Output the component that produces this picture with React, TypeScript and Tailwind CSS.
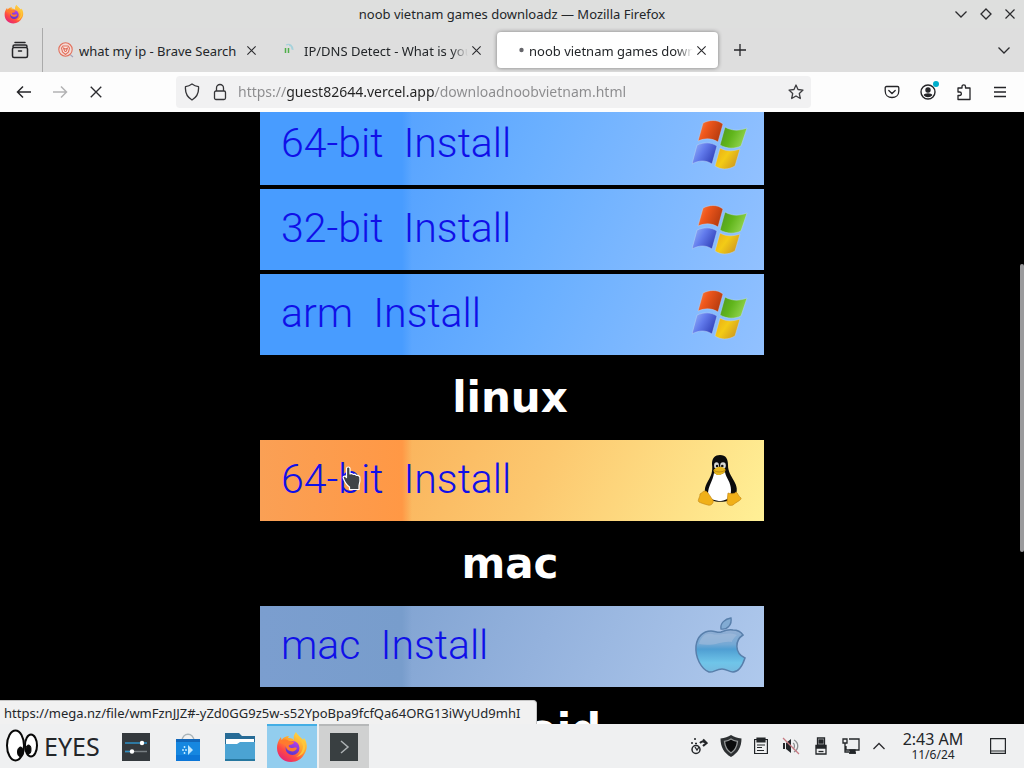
import type { ReactNode } from "react";

function Cross({ size = 12 }: { size?: number }) {
  return (
    <svg width={size} height={size} viewBox="0 0 12 12" fill="none" stroke="#2b2b2e" strokeWidth="1.2">
      <path d="M1.5 1.5l9 9M10.5 1.5l-9 9" />
    </svg>
  );
}

function Chevron({ up = false }: { up?: boolean }) {
  return (
    <svg width="14" height="14" viewBox="0 0 14 14" fill="none" stroke="#2b2b2e" strokeWidth="1.3">
      <path d={up ? "M1.5 10L7 4.5 12.5 10" : "M1.5 4.5L7 10l5.5-5.5"} />
    </svg>
  );
}

function FirefoxLogo({ size, id }: { size: number; id: string }) {
  return (
    <svg width={size} height={size} viewBox="0 0 32 32">
      <defs>
        <linearGradient id={id + "body"} x1="0.85" y1="0.05" x2="0.2" y2="1">
          <stop offset="0" stopColor="#ffe14a" />
          <stop offset="0.4" stopColor="#ffa12c" />
          <stop offset="0.7" stopColor="#ff4b42" />
          <stop offset="1" stopColor="#e02080" />
        </linearGradient>
        <linearGradient id={id + "globe"} x1="0.6" y1="0" x2="0.3" y2="1">
          <stop offset="0" stopColor="#b341e8" />
          <stop offset="1" stopColor="#5734cf" />
        </linearGradient>
      </defs>
      <path
        d="M20 1c1 3 5 5 7 8l1-2c3 4 4 10 1 15-3 6-8 9-14 9C7 31 1 25 1 17c0-4 1-7 4-11l.5 3C8 6 10 5 13 5l-1 2c2 0 4 0 6 2-1-3 0-6 2-8z"
        fill={"url(#" + id + "body)"}
      />
      <circle cx="16.5" cy="17" r="7" fill={"url(#" + id + "globe)"} />
      <path d="M3 11c3-3 7-3 10-1 2 0 4 0 5 1 0 2-3 3-5 3-1 2 1 3 3 3 2 0 3-1 5 0-1 3-4 4-7 3-3-1-5-4-4-7-3 0-5 0-7-2z" fill="#ff7a2e" />
      <path d="M20 2c1 4 6 7 7 13 0 5-3 9-7 11 8-1 11-9 8-15-2-4-6-5-8-9z" fill="#ffc73a" />
    </svg>
  );
}

function WindowsLogo() {
  return (
    <svg className="mt-[3px]" width="56" height="52" viewBox="0 0 56 52">
      <defs>
        <linearGradient id="winRed" x1="0" y1="0" x2="1" y2="0.4">
          <stop offset="0" stopColor="#f58a52" />
          <stop offset="0.4" stopColor="#f1581c" />
          <stop offset="1" stopColor="#b83c10" />
        </linearGradient>
        <linearGradient id="winGreen" x1="0" y1="0" x2="1" y2="0.4">
          <stop offset="0" stopColor="#4d9425" />
          <stop offset="0.5" stopColor="#60b51b" />
          <stop offset="1" stopColor="#91d34e" />
        </linearGradient>
        <linearGradient id="winBlue" x1="0" y1="0" x2="1" y2="0.5">
          <stop offset="0" stopColor="#9ab9fa" />
          <stop offset="0.5" stopColor="#627bec" />
          <stop offset="1" stopColor="#3546bd" />
        </linearGradient>
        <linearGradient id="winYellow" x1="0" y1="0" x2="1" y2="0.6">
          <stop offset="0" stopColor="#e9a818" />
          <stop offset="0.5" stopColor="#f3cb16" />
          <stop offset="1" stopColor="#cf9a20" />
        </linearGradient>
      </defs>
      <path d="M9 3c6-3 14-4 20 1l-5 18c-6-4-13-4-20-1z" transform="translate(2 0)" fill="url(#winRed)" stroke="#b9d4f5" strokeWidth=".5" />
      <path d="M33 7c7 4 14 4 22 1l-6 18c-6 3-14 3-21-1z" fill="url(#winGreen)" stroke="#b9d4f5" strokeWidth=".5" />
      <path d="M5 25c7-3 14-3 20 1l-5 18c-6-4-13-4-20 0z" fill="url(#winBlue)" stroke="#b9d4f5" strokeWidth=".5" />
      <path d="M28 28c7 4 14 3 20 1l-5 17c-7 4-14 4-20 0z" fill="url(#winYellow)" stroke="#b9d4f5" strokeWidth=".5" />
    </svg>
  );
}

function TuxLogo() {
  return (
    <svg width="56" height="52" viewBox="0 0 56 52">
      <path d="M20 9c0-6 3-9 8-9 6 0 8 4 8 10 0 7 3 10 6 16 3 5 4 10 1 15-3 7-24 8-28 1-3-5-3-9 1-16 3-5 5-9 4-17z" fill="#0b0b0c" />
      <path d="M22 18c4 3 7 2 11-1 1 6 6 10 6 18 0 7-3 10-10 11-6 0-12-2-13-7 0-8 5-13 6-21z" fill="#fff" />
      <ellipse cx="24.5" cy="10.5" rx="2.4" ry="3.2" fill="#d9d9d6" />
      <ellipse cx="31" cy="10.5" rx="2.8" ry="3.3" fill="#d9d9d6" />
      <circle cx="25" cy="11" r="1.2" fill="#111" />
      <circle cx="30.3" cy="11" r="1.3" fill="#111" />
      <path d="M21.5 15c2-2 5-4 7-3 2 0 5 1 5 3 0 3-5 5-7 5s-5-2-5-5z" fill="#e7b61d" />
      <path d="M22 15.500c3 2 7 2 11 0" fill="none" stroke="#a87611" strokeWidth=".7" />
      <path d="M8 39c2-1 3-3 5-3 3 0 5 6 8 9 1 3-2 6-5 5-4-1-7-2-9-3-2-2 1-4 1-8z" fill="#f0b019" stroke="#c68916" strokeWidth=".7" />
      <path d="M36 38c2 1 7 1 8-1 2 1 2 4 5 6 1 2-5 4-8 7-3 1-6 0-6-3z" fill="#f0b019" stroke="#c68916" strokeWidth=".7" />
    </svg>
  );
}

function AppleLogo() {
  return (
    <svg width="56" height="60" viewBox="0 0 56 60">
      <defs>
        <linearGradient id="appleFill" x1="0" y1="0" x2="0" y2="1">
          <stop offset="0" stopColor="#93afd4" />
          <stop offset="0.34" stopColor="#75a9d5" />
          <stop offset="0.46" stopColor="#4f9ed2" />
          <stop offset="0.78" stopColor="#6fc5e9" />
          <stop offset="1" stopColor="#75b9df" />
        </linearGradient>
      </defs>
      <path
        d="M29 15c5-2 8-3 12-2 5 0 8 2 10 5-8 5-9 18 2 23-2 6-6 14-12 14-4 0-6-3-11-3-6 0-9 4-13 3C9 52 3 40 4 29c1-9 7-15 15-15 4 0 7 2 10 1z"
        fill="url(#appleFill)"
        stroke="#587fab"
        strokeWidth="1.5"
      />
      <path d="M29 12C28 6 33 2 39 1c1 6-3 12-10 11z" fill="#82abd3" stroke="#587fab" strokeWidth="1.4" />
      <path d="M7 27c2-8 7-11 13-10 9 2 16-3 25 1-3 3-5 5-5 7-9-2-18 5-33 2z" fill="#a9bfdd" opacity=".5" />
    </svg>
  );
}

function HandCursor() {
  return (
    <svg className="absolute top-[26px] left-[82px]" width="20" height="26" viewBox="0 0 20 26">
      <path
        d="M4.500 2.500c0-2 3.500-2 3.500 0V8l1.500-.5 2 1 1.500-.3 1.500 1.300 1.500-.2 1.800 1.500c.5 3 .2 6-.8 9v3.700H7.500v-2.500c-3-2-5-5.500-6.300-9-.4-2 1.500-2.500 3.300-.5z"
        fill="#404446"
        stroke="#fff"
        strokeWidth="1.2"
        strokeLinejoin="round"
      />
    </svg>
  );
}

function InstallLink({ label, tone, logo, children }: { label: string; tone: string; logo: ReactNode; children?: ReactNode }) {
  return (
    <a
      href="#install"
      className={"relative flex h-[81px] shrink-0 items-center justify-between pr-4 pl-[21px] " + tone}
    >
      <span className="flex gap-5 pb-[3px] font-[Roboto,sans-serif] text-[41px] leading-12 font-light text-[#1010e8]">
        <span>{label}</span> <span>Install</span>
      </span>
      {logo}
      {children}
    </a>
  );
}

function Heading({ children }: { children: ReactNode }) {
  return (
    <h2 className="flex h-[85px] shrink-0 items-center justify-center pr-1 font-['DejaVu_Sans',sans-serif] text-[42px] leading-12 font-bold text-white">
      {children}
    </h2>
  );
}

const fade = "[mask-image:linear-gradient(90deg,#000_90%,transparent)]";

function Tab({ title, icon, active = false, long = false }: { title: string; icon: ReactNode; active?: boolean; long?: boolean }) {
  return (
    <div
      className={
        "flex h-9 w-[221px] items-center rounded pr-[11px] pl-[11px] " +
        (active ? "bg-white shadow-[0_0_4px_rgba(0,0,0,0.45)]" : "")
      }
    >
      <span className="flex w-[21px] shrink-0 items-center">{icon}</span>
      <button className={"min-w-0 flex-1 overflow-hidden pt-[2px] text-left text-[13px] leading-5 whitespace-nowrap " + (long ? fade : "")}>
        {title}
      </button>
      <button aria-label="Close tab" className="flex w-[14px] shrink-0 justify-end">
        <Cross size={11} />
      </button>
    </div>
  );
}

function TitleBar() {
  return (
    <header className="flex h-7 shrink-0 items-center justify-between bg-[#dedfde] pr-2 pl-1">
      <span className="w-21">
        <FirefoxLogo size={20} id="title" />
      </span>
      <h1 className="text-[13px] leading-5">noob vietnam games downloadz — Mozilla Firefox</h1>
      <span className="flex w-20 items-center justify-end gap-3">
        <button aria-label="Minimize"><Chevron /></button>
        <button aria-label="Maximize">
          <svg width="12" height="12" viewBox="0 0 12 12" fill="none" stroke="#2b2b2e" strokeWidth="1.3">
            <path d="M6 1l5 5-5 5-5-5z" />
          </svg>
        </button>
        <button aria-label="Close"><Cross /></button>
      </span>
    </header>
  );
}

function TabStrip() {
  return (
    <nav className="flex h-11 shrink-0 items-center bg-[#dedede] pr-[13px]">
      <button aria-label="Firefox View" className="flex h-full w-[43px] items-center justify-center border-r border-[#aaa] pr-[2px]">
        <svg width="18" height="18" viewBox="0 0 18 18" fill="none" stroke="#252528" strokeWidth="1.5" strokeLinecap="round">
          <path d="M4 1.500h10" />
          <path d="M2 5.500c0-1 .8-1.500 1.500-1.500h11c.7 0 1.500.5 1.500 1.500M3 6.500h12c1 0 1.500.5 1.500 1.500v7c0 .8-.7 1.500-1.500 1.500H3c-.8 0-1.500-.7-1.500-1.500V8c0-1 .5-1.500 1.500-1.500zM7.500 10h3" />
        </svg>
      </button>
      <div className="ml-1 flex gap-1">
        <Tab
          title="what my ip - Brave Search"
          icon={
            <svg width="16" height="16" viewBox="0 0 16 16" fill="none" stroke="#e2705c" strokeWidth="1.1">
              <circle cx="7.5" cy="7.5" r="6.700" fill="#f3dbd6" />
              <path d="M5 4h5l1.500 2-1 4-3 2.500L4.500 10l-1-4z" fill="#fbe9e5" />
              <path d="M5.500 6l2 1 2-1-1 3-1 .7-1-.7z" stroke="#e0705c" />
              <path d="M12.500 13l2.500 2" stroke="#a6a1b8" />
            </svg>
          }
        />
        <Tab
          long
          title="IP/DNS Detect - What is your IP"
          icon={
            <svg width="12" height="14" viewBox="0 0 12 14" fill="none">
              <path d="M2.500 5v5M5.500 5v5" stroke="#4fae49" strokeWidth="1.500" />
              <path d="M3 2c4-2 7 1 7 5M6 2.500c2 0 3 2 3 4" stroke="#a6d2db" strokeWidth="1.2" />
            </svg>
          }
        />
        <Tab
          active
          long
          title="noob vietnam games downloadz"
          icon={
            <svg width="16" height="16" viewBox="0 0 16 16">
              <circle cx="13.500" cy="8" r="2.200" fill="#66666b" />
            </svg>
          }
        />
      </div>
      <button aria-label="New tab" className="ml-[15px]">
        <svg width="14" height="14" viewBox="0 0 14 14" stroke="#252528" strokeWidth="1.3">
          <path d="M7 1v12M1 7h12" />
        </svg>
      </button>
      <button aria-label="List all tabs" className="ml-auto"><Chevron /></button>
    </nav>
  );
}

function Toolbar() {
  return (
    <div className="flex h-10 shrink-0 items-center bg-[#fdfdfd] px-4">
      <div className="flex gap-5">
        <button aria-label="Back">
          <svg width="16" height="16" viewBox="0 0 16 16" fill="none" stroke="#252528" strokeWidth="1.5"><path d="M15 8H1.500M7 2.500L1.500 8 7 13.500" /></svg>
        </button>
        <button aria-label="Forward">
          <svg width="16" height="16" viewBox="0 0 16 16" fill="none" stroke="#b2b2b4" strokeWidth="1.5"><path d="M1 8h13.500M9 2.500L14.500 8 9 13.500" /></svg>
        </button>
        <button aria-label="Stop" className="flex w-4 items-center justify-center"><Cross size={14} /></button>
      </div>
      <div className="mr-[73px] ml-[72px] flex h-8 flex-1 items-center rounded bg-[#f1f1f2] pr-[7px] pl-2">
        <svg width="16" height="18" viewBox="0 0 16 18" fill="none" stroke="#353538" strokeWidth="1.300" strokeLinejoin="round">
          <path d="M8 1c2 1.500 4 2.300 6.500 2.600C15 9 13 14 8 17 3 14 1 9 1.500 3.600 4 3.300 6 2.500 8 1z" />
        </svg>
        <svg className="ml-3" width="16" height="18" viewBox="0 0 16 18" fill="none" stroke="#353538" strokeWidth="1.300">
          <rect x="2.500" y="8" width="11" height="8.500" rx="1.500" />
          <path d="M4.500 8V5a3.500 3.500 0 017 0v3" />
        </svg>
        <input
          aria-label="Address"
          className="ml-[10px] min-w-0 flex-1 bg-[linear-gradient(90deg,#8b8b8d_48px,#222_48px,#222_197px,#8b8b8d_197px)] bg-clip-text text-[14px] leading-5 text-transparent outline-none"
          defaultValue="https://guest82644.vercel.app/downloadnoobvietnam.html"
        />
        <button aria-label="Bookmark">
          <svg width="16" height="16" viewBox="0 0 16 16" fill="none" stroke="#3d3d40" strokeWidth="1.300" strokeLinejoin="round">
            <path d="M8 1l2 4.500 5 .6-3.700 3.400 1 5L8 12l-4.300 2.500 1-5L1 6.100l5-.6z" />
          </svg>
        </button>
      </div>
      <div className="flex gap-5">
        <button aria-label="Pocket">
          <svg width="16" height="16" viewBox="0 0 16 16" fill="none" stroke="#252528" strokeWidth="1.300" strokeLinecap="round">
            <path d="M2.500 2.500h11c.8 0 1.300.5 1.300 1.300V7c0 4-3 6.500-6.800 6.500S1.200 11 1.200 7V3.800c0-.8.5-1.300 1.300-1.300zM4.800 6.500L8 9.500l3.200-3" />
          </svg>
        </button>
        <button aria-label="Account" className="relative">
          <svg width="16" height="16" viewBox="0 0 16 16" fill="none" stroke="#252528" strokeWidth="1.400">
            <circle cx="8" cy="8" r="7" />
            <circle cx="8" cy="6" r="2" fill="#252528" />
            <path d="M4.500 11c.5-1.500 6.500-1.500 7 0-1.500 2-5.500 2-7 0z" fill="#252528" />
          </svg>
          <span className="absolute -top-[2px] -right-[3px] size-[6px] rounded-full bg-[#00aecb]" />
        </button>
        <button aria-label="Extensions">
          <svg width="16" height="18" viewBox="0 0 16 18" fill="none" stroke="#252528" strokeWidth="1.300" strokeLinejoin="round">
            <path d="M2 16.500v-4h1.500c2.500 0 2.500-3.500 0-3.500H2V5h4V3.500c0-2.300 3.500-2.300 3.500 0V5H14v11.500z" />
          </svg>
        </button>
        <button aria-label="Menu">
          <svg width="16" height="16" viewBox="0 0 16 16" stroke="#252528" strokeWidth="1.300"><path d="M2 3.500h12M2 8h12M2 12.500h12" /></svg>
        </button>
      </div>
    </div>
  );
}

const blue = "bg-[linear-gradient(90deg,#489cff_0,#489cff_142px,transparent_152px),linear-gradient(115deg,#55a2ff_25%,#6bb0ff_55%,#92c1ff_100%)]";
const orange = "bg-[linear-gradient(90deg,#faa055_0,#ff9845_142px,transparent_152px),linear-gradient(115deg,#fab35c_25%,#fcc86f_55%,#fff096_100%)]";
const steel = "bg-[linear-gradient(90deg,#7b9ecf_0,#789dcc_142px,transparent_152px),linear-gradient(115deg,#82a4d2_25%,#94b2dd_55%,#afc9ed_100%)]";

function Page() {
  return (
    <main className="relative min-h-0 flex-1 overflow-hidden bg-black">
      <div className="mx-auto -mt-2 flex w-[504px] max-w-full flex-col">
        <div className="flex flex-col gap-1">
          <InstallLink label="64-bit" tone={blue} logo={<WindowsLogo />} />
          <InstallLink label="32-bit" tone={blue} logo={<WindowsLogo />} />
          <InstallLink label="arm" tone={blue} logo={<WindowsLogo />} />
        </div>
        <Heading>linux</Heading>
        <InstallLink label="64-bit" tone={orange} logo={<TuxLogo />}>
          <HandCursor />
        </InstallLink>
        <Heading>mac</Heading>
        <InstallLink label="mac" tone={steel} logo={<AppleLogo />} />
        <Heading>android</Heading>
      </div>
      <div className="absolute top-[152px] right-0 h-[288px] w-1 rounded bg-[#9a9a9c]" />
      <div className="absolute bottom-0 left-0 rounded-tr border-t border-r border-[#c5c5c5] bg-[#f1f1f1] pt-[2px] pr-4 pb-px pl-1 text-[13px] leading-5 whitespace-nowrap">
        https://mega.nz/file/wmFznJJZ#-yZd0GG9z5w-s52YpoBpa9fcfQa64ORG13iWyUd9mhI
      </div>
    </main>
  );
}

function AppButton({ label, tone = "", children }: { label: string; tone?: string; children: ReactNode }) {
  return (
    <button aria-label={label} className={"flex w-[50px] items-center justify-center border-t-2 " + (tone || "border-transparent")}>
      {children}
    </button>
  );
}

function TrayButton({ label, children }: { label: string; children: ReactNode }) {
  return (
    <button aria-label={label} className="flex w-[30px] items-center justify-center">
      {children}
    </button>
  );
}

function Taskbar() {
  return (
    <footer className="flex h-11 shrink-0 bg-[#eff0f1] text-[#232629]">
      <button className="flex w-[111px] items-center gap-[6px] pl-[6px] text-[25px] leading-8">
        <svg width="32" height="34" viewBox="0 0 32 34" stroke="#080808">
          <ellipse cx="9.500" cy="16.500" rx="8.500" ry="15" fill="#fff" strokeWidth="2" />
          <ellipse cx="25" cy="16.500" rx="6" ry="11" fill="#fff" strokeWidth="2" />
          <ellipse cx="14.500" cy="23" rx="3" ry="5" fill="#080808" />
          <ellipse cx="22.500" cy="20.500" rx="2.500" ry="4.500" fill="#080808" />
        </svg>
        EYES
      </button>
      <div className="flex gap-[2px]">
        <AppButton label="System settings">
          <svg width="28" height="28" viewBox="0 0 28 28">
            <rect width="28" height="28" fill="#34393d" />
            <path d="M3 10h22" stroke="#2d8fc4" strokeWidth="1.500" />
            <path d="M3 18.500h22" stroke="#777e82" strokeWidth="1.500" />
            <path d="M3 18.500h7" stroke="#2d8fc4" strokeWidth="1.500" />
            <circle cx="20" cy="10" r="2.200" fill="#fff" />
            <circle cx="10" cy="18.500" r="2.200" fill="#fff" />
          </svg>
        </AppButton>
        <AppButton label="Software center">
          <svg width="26" height="30" viewBox="0 0 26 30">
            <path d="M7 9c0-9 12-9 12 0" fill="none" stroke="#aab5ba" strokeWidth="1.300" />
            <path d="M1 7h24v22H1z" fill="#1687e0" />
            <path d="M1 7h24v3H1z" fill="#1267ba" />
            <path d="M1 23h24v6H1z" fill="#0c76d7" />
            <path d="M13 13l5 5-5 5z" fill="#bde7ff" />
            <path d="M9.500 14v2M7 18h2M9.500 20v2M11 17v2" stroke="#bde7ff" strokeWidth="1.500" />
          </svg>
        </AppButton>
        <AppButton label="Files">
          <svg width="30" height="28" viewBox="0 0 30 28">
            <path d="M0 0h14l3 3h13v9H0z" fill="#276b96" />
            <path d="M1 6h28v5H1z" fill="#fff" />
            <path d="M0 11h12l3-2h15v19H0z" fill="#4ba3d3" />
            <path d="M0 26h30v2H0z" fill="#26779f" />
          </svg>
        </AppButton>
        <AppButton label="Firefox" tone="border-[#43aee5] bg-[#92cdee]"><FirefoxLogo size={32} id="task" /></AppButton>
        <AppButton label="Terminal" tone="border-[#b6b8b9] bg-[#d0d1d1]">
          <svg width="28" height="28" viewBox="0 0 28 28" fill="none">
            <rect width="28" height="28" fill="#393f41" />
            <path d="M11 8l7 6-7 6" stroke="#aeb3b5" strokeWidth="1.500" />
          </svg>
        </AppButton>
      </div>
      <div className="ml-auto flex">
        <TrayButton label="Updates">
          <svg width="18" height="18" viewBox="0 0 18 18" fill="none" stroke="#232629">
            <circle cx="6" cy="12.500" r="4" strokeWidth="1.500" />
            <path d="M5 10l2 3 2-3" strokeWidth="1.300" />
            <path d="M10 6c2-2 3-2 6 0M13 2.500L16.500 6 13 9" strokeWidth="2.200" />
            <path d="M1 6h2M4 2h2M5 6.500h2" strokeWidth="1.500" />
          </svg>
        </TrayButton>
        <TrayButton label="Security">
          <svg className="ml-1" width="22" height="22" viewBox="0 0 22 22">
            <path d="M11 0c3 2 6 3 10.500 3.500C21.500 12 18 18 11 22 4 18 .5 12 .5 3.500 5 3 8 2 11 0z" fill="#2d3032" />
            <path d="M11 4c2 1.500 4 2 6.500 2.300C17 12 15 15.500 11 18 7 15.500 5 12 4.500 6.300 7 6 9 5.500 11 4z" fill="#0a0b0c" stroke="#96999a" strokeWidth="1.300" />
          </svg>
        </TrayButton>
        <TrayButton label="Clipboard">
          <svg className="ml-1" width="14" height="18" viewBox="0 0 14 18" fill="none" stroke="#232629" strokeWidth="1.200">
            <path d="M.6 2.500h12.800v14H.6z" /><path d="M3 1h8v4H3z" fill="#232629" /><path d="M3 8h8M3 10.500h5M3 13.500h7" />
          </svg>
        </TrayButton>
        <TrayButton label="Volume muted">
          <svg className="ml-1" width="18" height="18" viewBox="0 0 18 18" fill="none">
            <path d="M1 6h2v6H1zM4 6l5-4v14l-5-4z" fill="#232629" />
            <path d="M11 6c2 1 2 5 0 6M12 3c5 3 5 9 0 12" stroke="#8b8e90" strokeWidth="1.300" />
            <path d="M1 1l16 16" stroke="#c77a83" strokeWidth="1.300" />
          </svg>
        </TrayButton>
        <TrayButton label="Removable devices">
          <svg className="ml-1" width="12" height="18" viewBox="0 0 12 18" fill="none" stroke="#232629" strokeWidth="1.300">
            <path d="M2.500 1h7v7h-7zM1 8.500h10v8.500H1z" /><path d="M4 3h4v3H4zM1.500 9h9v2h-9z" fill="#232629" /><path d="M3.500 14.500h5" />
          </svg>
        </TrayButton>
        <TrayButton label="Network">
          <svg className="ml-1" width="18" height="18" viewBox="0 0 18 18" fill="none" stroke="#232629" strokeWidth="1.300">
            <path d="M7 2h10v11H4v-4M1 2h4v4H1zM3 6v9h4M7 16h7" /><path d="M8 13h5v3H8z" fill="#232629" />
          </svg>
        </TrayButton>
        <TrayButton label="Show hidden icons"><Chevron up /></TrayButton>
        <button className="flex w-[78px] flex-col items-center justify-center">
          <span className="text-[16px] leading-[18px]">2:43 AM</span>
          <span className="text-[12px] leading-[14px]">11/6/24</span>
        </button>
        <button aria-label="Show desktop" className="flex w-[52px] items-center justify-center">
          <svg width="16" height="16" viewBox="0 0 16 16" fill="none" stroke="#232629" strokeWidth="1.200"><path d="M.6.600h14.800v14.800H.6zM1 13h14" /></svg>
        </button>
      </div>
    </footer>
  );
}

export default function App() {
  return (
    <div className="flex h-screen flex-col overflow-hidden font-['Noto_Sans',sans-serif] text-[#232629]">
      <TitleBar />
      <TabStrip />
      <Toolbar />
      <Page />
      <Taskbar />
    </div>
  );
}
